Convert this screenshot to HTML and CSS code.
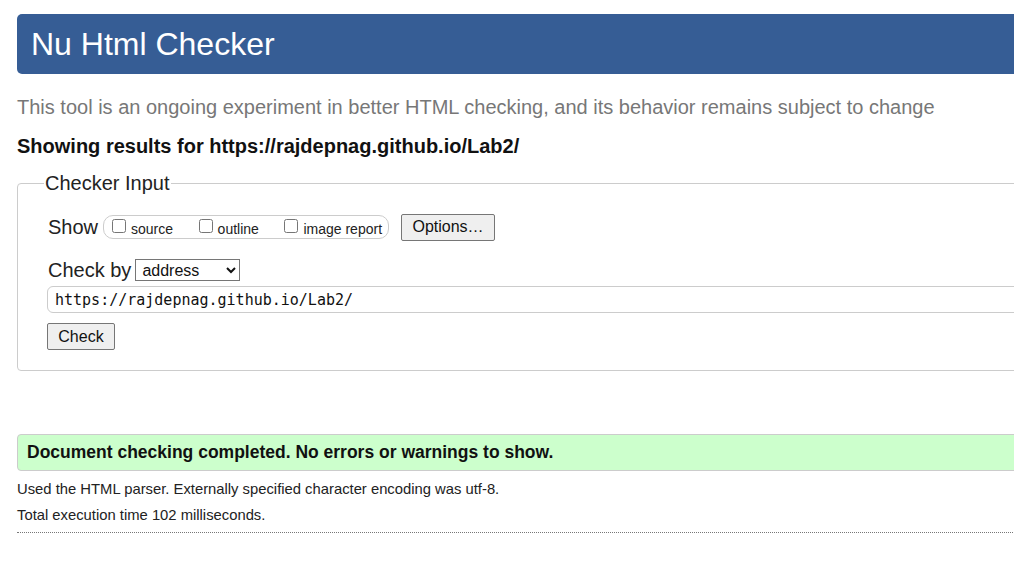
FILE: index.html
```html
<!DOCTYPE html>
<html lang="en">
<head>
<meta charset="utf-8">
<title>Nu Html Checker</title>
<link rel="stylesheet" href="styles.css">
</head>
<body>
<div class="page">
  <h1 class="banner">Nu Html Checker</h1>
  <p class="tagline">This tool is an ongoing experiment in better HTML checking, and its behavior remains subject to change</p>
  <p class="showing">Showing results for https://rajdepnag.github.io/Lab2/</p>
  <fieldset class="checker">
    <legend>Checker Input</legend>
    <div class="row show-row">
      <span class="label">Show</span>
      <span class="opts">
        <label class="opt"><input type="checkbox"> source</label>
        <label class="opt"><input type="checkbox"> outline</label>
        <label class="opt"><input type="checkbox"> image report</label>
      </span>
      <button class="btn options" type="button">Options…</button>
    </div>
    <div class="row by-row">
      <span class="label">Check by</span>
      <select class="sel"><option>address</option></select>
    </div>
    <input class="url" type="text" value="https://rajdepnag.github.io/Lab2/">
    <div><button class="btn check" type="button">Check</button></div>
  </fieldset>
  <p class="success">Document checking completed. No errors or warnings to show.</p>
  <p class="details">Used the HTML parser. Externally specified character encoding was utf-8.</p>
  <p class="details">Total execution time 102 milliseconds.</p>
  <hr class="rule">
</div>
</body>
</html>
```
FILE: styles.css
```css
html { overflow: hidden; }
body {
  margin: 0;
  font-family: "Liberation Sans", Arial, sans-serif;
  color: #222;
  background: #fff;
}
.page {
  width: 1060px;
  padding: 14px 0 0 17px;
}
.banner {
  margin: 0;
  height: 60px;
  box-sizing: border-box;
  background: #365d95;
  color: #fff;
  border-radius: 5px;
  font-size: 32px;
  font-weight: normal;
  line-height: 60px;
  padding-left: 14px;
}
.tagline {
  margin: 21px 0 0;
  font-size: 20px;
  line-height: 24px;
  color: #777;
}
.showing {
  margin: 15px 0 0;
  font-size: 20px;
  font-weight: bold;
  line-height: 24px;
  color: #111;
}
.checker {
  margin: 14px 0 0;
  border: 1px solid #ccc;
  border-radius: 4px;
  padding: 19px 0 20px 30px;
  min-width: 0;
}
.checker legend {
  font-size: 20px;
  line-height: 22px;
  padding: 0 1px;
  margin-left: -4px;
  color: #222;
}
.row {
  display: flex;
  align-items: center;
}
.label {
  font-size: 20px;
  color: #222;
}
.show-row { height: 28px; }
.opts {
  margin-left: 5px;
  display: flex;
  align-items: center;
  height: 22px;
  border: 1px solid #ccc;
  border-radius: 10px;
  padding: 0 6px 0 8px;
  width: 270px;
  justify-content: space-between;
}
.opt {
  font-size: 14px;
  color: #222;
  display: flex;
  align-items: center;
  gap: 5px;
  margin-top: 3px;
}
.opt input {
  margin: 0;
  width: 14px;
  height: 14px;
  position: relative;
  top: -3px;
}
.btn {
  font-family: "Liberation Sans", Arial, sans-serif;
  font-size: 16px;
  color: #111;
  background: #efefef;
  border: 1px solid #767676;
  border-radius: 2px;
  padding: 0 10px;
  height: 27px;
}
.options { margin-left: 12px; width: 94px; }
.by-row { margin-top: 17px; height: 24px; }
.sel {
  margin-left: 4px;
  width: 105px;
  height: 22px;
  font-family: "Liberation Sans", Arial, sans-serif;
  font-size: 16px;
  color: #111;
  border: 1px solid #767676;
  border-radius: 0;
  background: #fff;
  padding: 0 2px;
}
.url {
  display: block;
  margin: 4px 0 0 -1px;
  width: 100%;
  box-sizing: border-box;
  height: 27px;
  border: 1px solid #ccc;
  border-radius: 6px;
  padding: 0 7px;
  font-family: "DejaVu Sans Mono", "Liberation Mono", monospace;
  font-size: 15px;
  color: #111;
}
.check {
  margin: 10px 0 0 -1px;
  width: 68px;
  padding: 0;
}
.success {
  margin: 63px 0 0;
  height: 37px;
  box-sizing: border-box;
  background: #ccffcc;
  border: 1px solid #ccc;
  border-radius: 4px;
  padding-left: 9px;
  font-size: 17.5px;
  font-weight: bold;
  line-height: 35px;
  color: #111;
}
.details {
  margin: 10px 0 0;
  font-size: 14.8px;
  line-height: 16px;
  color: #222;
}
.details + .details { margin-top: 10px; }
.rule {
  margin: 9px 0 0;
  border: 0;
  border-top: 1px dotted #777;
  height: 0;
}
```
